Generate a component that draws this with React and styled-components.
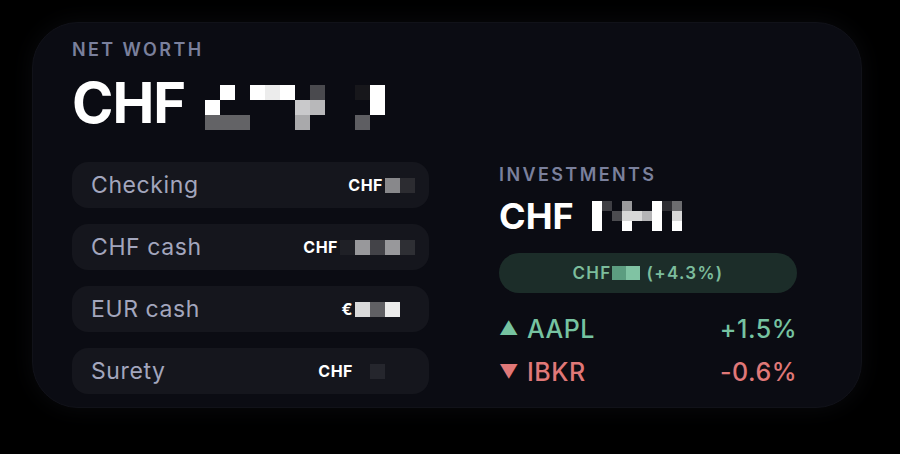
import React from 'react';
import styled, { createGlobalStyle } from 'styled-components';

const GlobalStyle = createGlobalStyle`
  html, body {
    margin: 0;
    padding: 0;
    background: #000;
    font-family: Inter, "Noto Sans", sans-serif;
  }
`;

// pixelated blocks that hide the amounts
const _ = null;
const W = '#ffffff';

const netWorthBlur = [
  [_, W, _, W, '#ececec', W, _, '#4a4a4e', _, _, '#17171b', W],
  [W, _, _, _, _, _, '#c9c9cb', '#b8b8ba', _, _, _, W],
  ['#636366', '#636366', '#636366', _, _, _, '#a9a9ab', _, _, _, '#5e5e62', _],
];

const investBlur = [
  [W, '#3f3f44', _, '#9a9a9c', _, _, W, '#2e2e33', '#6d6d70'],
  [W, _, '#4c4c50', '#d8d8d8', '#d8d8d8', '#b4b4b6', W, _, '#d8d8d8'],
  [W, _, _, W, _, _, W, _, W],
];

const accounts = [
  { name: 'Checking', prefix: 'CHF', cells: [['#88888b', '#2c2c31']] },
  { name: 'CHF cash', prefix: 'CHF', cells: [['#1f2026', '#98989b', '#434348', '#98989b', '#2e2f34']] },
  { name: 'EUR cash', prefix: '€', cells: [['#d9d9da', '#606064', '#ececec', _]] },
  { name: 'Surety', prefix: 'CHF', cells: [[_, '#25262d', _, _]] },
];

const Mosaic = ({ rows, size }) => (
  <Grid $cols={rows[0].length} $size={size}>
    {rows.flat().map((c, i) => (
      <Cell key={i} $c={c} />
    ))}
  </Grid>
);

export default function App() {
  return (
    <>
      <GlobalStyle />
      <Page>
        <Card>
          <Label>Net Worth</Label>
          <Total>
            <span>CHF</span>
            <Mosaic rows={netWorthBlur} size={15} />
          </Total>
          <Columns>
            <AccountList>
              {accounts.map((a) => (
                <AccountRow key={a.name}>
                  <AccountName>{a.name}</AccountName>
                  <Amount>
                    <span>{a.prefix}</span>
                    <Mosaic rows={a.cells} size={15} />
                  </Amount>
                </AccountRow>
              ))}
            </AccountList>
            <Investments>
              <Label>Investments</Label>
              <SubTotal>
                <span>CHF</span>
                <Mosaic rows={investBlur} size={10} />
              </SubTotal>
              <Gain>
                <span>CHF</span>
                <Mosaic rows={[['#5c9d80', '#80c3a3']]} size={14} />
                <span>(+4.3%)</span>
              </Gain>
              <Holdings>
                <Holding $up>
                  <Ticker>
                    <Arrow $up>▲</Arrow>AAPL
                  </Ticker>
                  <span>+1.5%</span>
                </Holding>
                <Holding>
                  <Ticker>
                    <Arrow>▼</Arrow>IBKR
                  </Ticker>
                  <span>-0.6%</span>
                </Holding>
              </Holdings>
            </Investments>
          </Columns>
        </Card>
      </Page>
    </>
  );
}

const Page = styled.div`
  width: 900px;
  height: 454px;
  box-sizing: border-box;
  padding: 22px 38px 0 32px;
  background: #000;
`;

const Card = styled.div`
  box-sizing: border-box;
  height: 386px;
  padding: 14px 39px 0 39px;
  border-radius: 46px;
  background: #0b0c13;
  border: 1px solid #111219;
  box-shadow: 0 0 24px rgba(30, 32, 40, 0.35);
`;

const Label = styled.div`
  font-size: 18px;
  font-weight: 600;
  letter-spacing: 2.4px;
  text-transform: uppercase;
  color: #7a809c;
  line-height: 26px;
`;

const Total = styled.div`
  display: flex;
  align-items: center;
  gap: 20px;
  height: 72px;
  margin-top: 4px;
  font-size: 56px;
  font-weight: 700;
  color: #fff;
  letter-spacing: -1px;

  & > div {
    margin-top: 8px;
  }
`;

const Grid = styled.div`
  display: grid;
  grid-template-columns: repeat(${(p) => p.$cols}, ${(p) => p.$size}px);
  grid-auto-rows: ${(p) => p.$size}px;
`;

const Cell = styled.i`
  display: block;
  background: ${(p) => p.$c || 'transparent'};
`;

const Columns = styled.div`
  display: grid;
  grid-template-columns: 357px 298px;
  column-gap: 70px;
  margin-top: 23px;
`;

const AccountList = styled.div`
  display: flex;
  flex-direction: column;
  gap: 16px;
`;

const AccountRow = styled.div`
  display: flex;
  align-items: center;
  justify-content: space-between;
  height: 46px;
  padding: 0 14px 0 19px;
  border-radius: 16px;
  background: #15161d;
`;

const AccountName = styled.span`
  font-size: 23px;
  font-weight: 400;
  color: #a3a6bd;
  letter-spacing: 0.6px;
`;

const Amount = styled.div`
  display: flex;
  align-items: center;
  gap: 2px;
  font-size: 16px;
  font-weight: 700;
  color: #fff;
  letter-spacing: 0.5px;
`;

const Investments = styled.div`
  display: flex;
  flex-direction: column;
`;

const SubTotal = styled.div`
  display: flex;
  align-items: center;
  gap: 18px;
  height: 48px;
  margin-top: 4px;
  font-size: 36px;
  font-weight: 700;
  color: #fff;
`;

const Gain = styled.div`
  display: flex;
  align-items: center;
  justify-content: center;
  height: 40px;
  margin-top: 13px;
  border-radius: 20px;
  background: #1c2d29;
  color: #7cbd9c;
  font-size: 17px;
  font-weight: 600;
  letter-spacing: 1.3px;

  & > span:last-child {
    margin-left: 7px;
  }
`;

const Holdings = styled.div`
  display: flex;
  flex-direction: column;
  gap: 12px;
  margin-top: 20px;
`;

const Holding = styled.div`
  display: flex;
  align-items: center;
  justify-content: space-between;
  height: 31px;
  font-size: 25px;
  font-weight: 500;
  letter-spacing: 0.5px;
  color: ${(p) => (p.$up ? '#76c3a1' : '#e07878')};
`;

const Ticker = styled.span`
  display: flex;
  align-items: center;
`;

const Arrow = styled.span`
  font-size: 19px;
  width: 28px;
  color: ${(p) => (p.$up ? '#76c3a1' : '#e07878')};
`;
